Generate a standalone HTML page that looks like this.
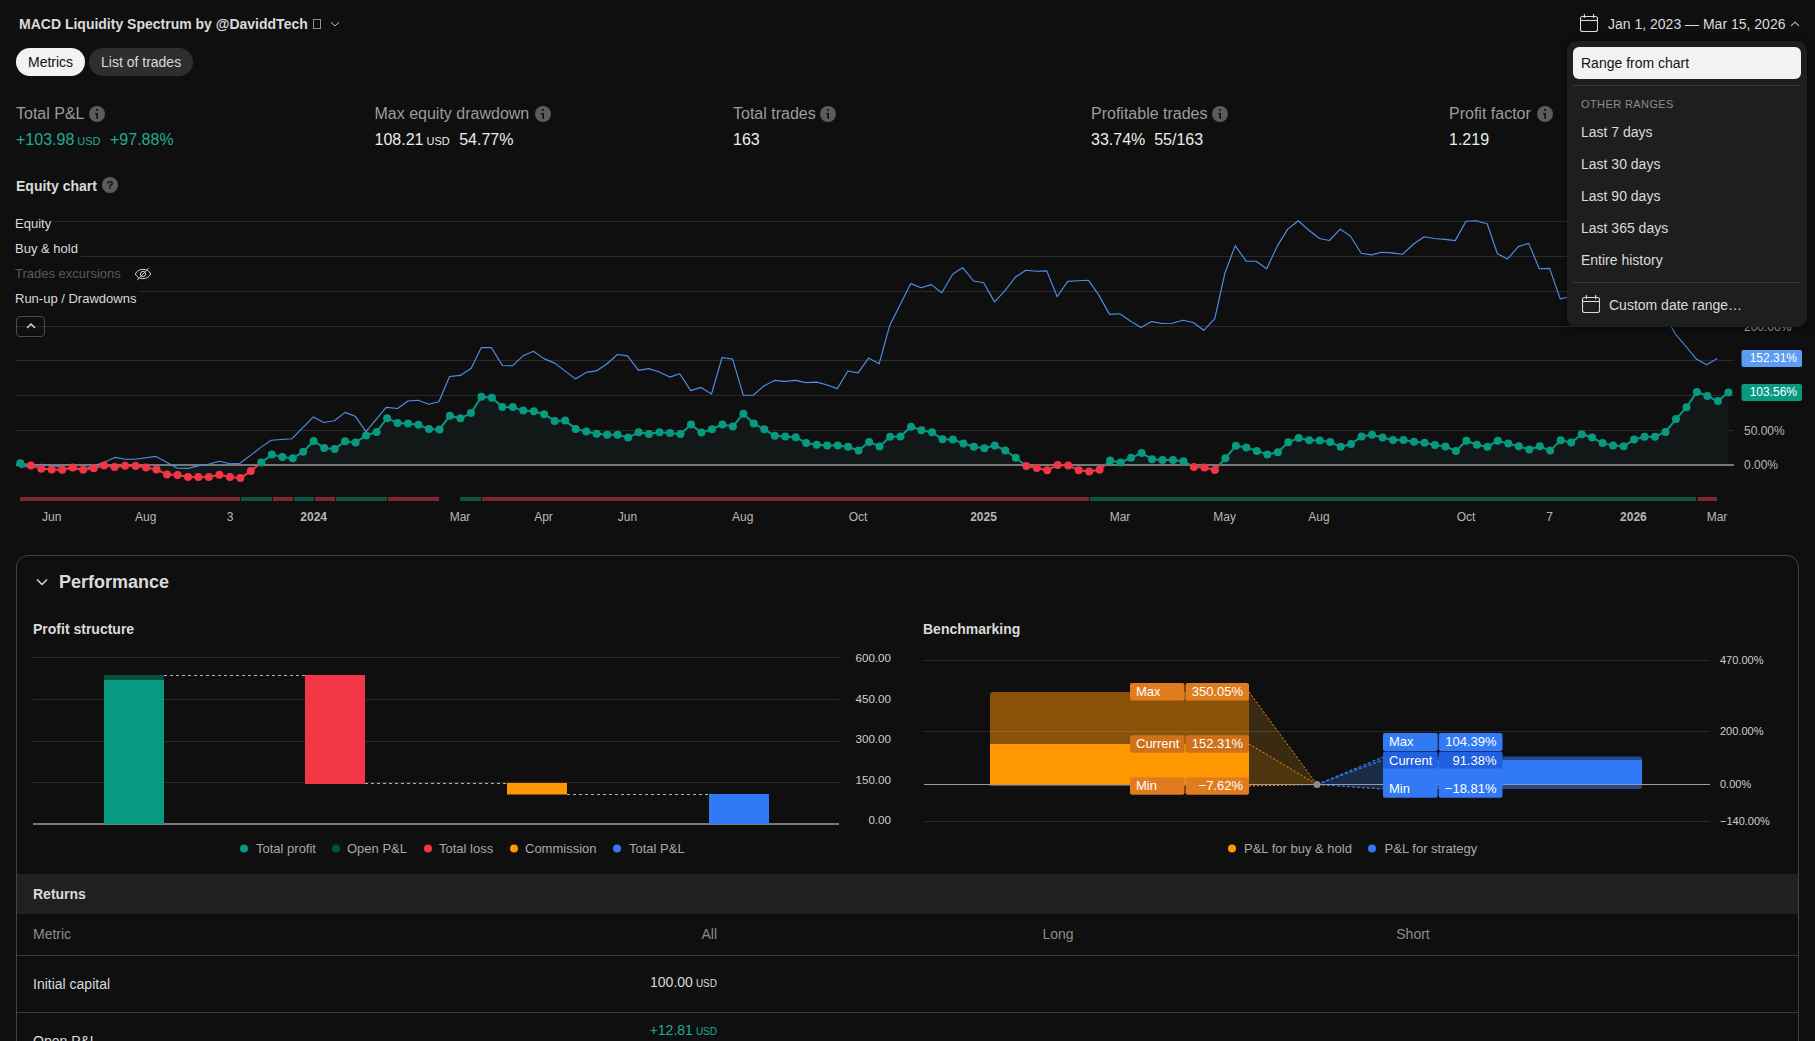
<!DOCTYPE html>
<html><head><meta charset="utf-8">
<style>
*{margin:0;padding:0;box-sizing:border-box}
html,body{width:1815px;height:1041px;overflow:hidden;background:#0f0f0f}
body{position:relative;font-family:"Liberation Sans",sans-serif;color:#dbdbdb}
.a{position:absolute;white-space:nowrap}
.ic{position:absolute;width:16px;height:16px}
svg text{font-family:"Liberation Sans",sans-serif}
.ml{font-size:16px;color:#9c9c9c}
.mv{font-size:16px;color:#ececec}
.usd{font-size:11px}
.dd{font-size:14px;color:#dbdbdb}
</style></head><body>
<svg class="a" style="left:0;top:0" width="1815" height="1041">
<line x1="16" y1="221.5" x2="1734" y2="221.5" stroke="#2a2a2a" stroke-width="1"/>
<line x1="16" y1="256.5" x2="1734" y2="256.5" stroke="#2a2a2a" stroke-width="1"/>
<line x1="16" y1="291.5" x2="1734" y2="291.5" stroke="#2a2a2a" stroke-width="1"/>
<line x1="16" y1="326.5" x2="1734" y2="326.5" stroke="#2a2a2a" stroke-width="1"/>
<line x1="16" y1="360.5" x2="1734" y2="360.5" stroke="#2a2a2a" stroke-width="1"/>
<line x1="16" y1="395.5" x2="1734" y2="395.5" stroke="#2a2a2a" stroke-width="1"/>
<line x1="16" y1="430.5" x2="1734" y2="430.5" stroke="#2a2a2a" stroke-width="1"/>
<path d="M20.3,465 L20.3,463.3 L30.8,465.4 L41.3,468.8 L51.7,469.5 L62.2,469.8 L72.7,467.5 L83.2,469.8 L93.7,468.2 L104.1,465.4 L114.6,467 L125.1,465.7 L135.6,466.1 L146,467.5 L156.5,469.5 L167,474.4 L177.5,475 L188,477.1 L198.4,477.1 L208.9,477.1 L219.4,474.8 L229.9,477.1 L240.4,478.1 L250.8,471.1 L261.3,462.6 L271.8,454.6 L282.3,457.1 L292.8,458.2 L303.2,451.8 L313.7,441 L324.2,447.9 L334.7,448.9 L345.1,441.2 L355.6,442.4 L366.1,435.5 L376.6,432 L387.1,418.2 L397.5,422.9 L408,423.4 L418.5,424.8 L429,429.1 L439.5,429.4 L449.9,415.7 L460.4,418.3 L470.9,413.1 L481.4,396.7 L491.9,397.8 L502.3,407.1 L512.8,407.1 L523.3,410.6 L533.8,411.3 L544.2,414.2 L554.7,420.9 L565.2,420.6 L575.7,428.9 L586.2,431.4 L596.6,433.7 L607.1,434.7 L617.6,434.7 L628.1,437.6 L638.6,432.3 L649,434 L659.5,432.3 L670,433 L680.5,434.1 L691,424.5 L701.4,432.6 L711.9,429.2 L722.4,424.5 L732.9,426.4 L743.4,413.7 L753.8,423.4 L764.3,429.3 L774.8,435.8 L785.3,436.5 L795.7,437.2 L806.2,443.1 L816.7,444.7 L827.2,445.4 L837.7,445.4 L848.1,446.8 L858.6,450.5 L869.1,442 L879.6,446.4 L890.1,436.7 L900.5,436.5 L911,426.8 L921.5,430.3 L932,432.3 L942.5,439.2 L952.9,439.5 L963.4,443.4 L973.9,446.8 L984.4,448.2 L994.8,445.4 L1005.3,450.5 L1015.8,457.8 L1026.3,466.1 L1036.8,467.9 L1047.2,470.2 L1057.7,465.1 L1068.2,465.4 L1078.7,470.2 L1089.2,471.6 L1099.6,469.8 L1110.1,460.6 L1120.6,462.4 L1131.1,457.8 L1141.6,453 L1152,459.2 L1162.5,459.9 L1173,459.9 L1183.5,461.3 L1193.9,467 L1204.4,467.5 L1214.9,470 L1225.4,458.2 L1235.9,445.8 L1246.3,447.5 L1256.8,450.9 L1267.3,454.4 L1277.8,452.3 L1288.3,442.3 L1298.7,438.1 L1309.2,440.3 L1319.7,440.6 L1330.2,442 L1340.7,446.8 L1351.1,444 L1361.6,436.5 L1372.1,434.7 L1382.6,437.6 L1393,439.9 L1403.5,439.9 L1414,441.7 L1424.5,442.7 L1435,445 L1445.4,446.4 L1455.9,451 L1466.4,440.7 L1476.9,444.7 L1487.4,446.8 L1497.8,440.7 L1508.3,443.6 L1518.8,446.3 L1529.3,449.5 L1539.8,446.3 L1550.2,450.6 L1560.7,440.2 L1571.2,442.6 L1581.7,434.3 L1592.1,437.5 L1602.6,443.1 L1613.1,445.5 L1623.6,446.3 L1634.1,439.6 L1644.5,436.7 L1655,436.7 L1665.5,431.9 L1676,419.1 L1686.5,407.2 L1696.9,392 L1707.4,396 L1717.9,401.1 L1728.4,392.5 L1728.4,465 Z" fill="#121717"/>
<line x1="16" y1="465" x2="1734" y2="465" stroke="#9b9b9b" stroke-width="1.5"/>
<polyline fill="none" stroke="#4f8fe6" stroke-width="1.15" stroke-linejoin="round" points="20.3,467.5 31,466 41.7,464.3 56.8,466.1 67.9,468.8 83,469.5 92.6,466.1 103.7,462.6 114.7,457.4 125.7,459.2 135.3,459.2 156,456.4 167,462.6 177.4,468.2 188.4,468.4 200,465.4 208.3,464.3 219.4,461.3 230,463.7 240,463.3 250.5,455.4 260.8,447.4 271.3,440.2 291.8,438.8 313.4,416.9 323.8,422.5 334.3,420.8 345.1,412.4 355.2,416.2 366,431.6 386.2,407.4 397.7,408.5 407.8,401 417.9,400.3 428.7,404.2 438.8,401.8 449.6,376.5 460.4,375.4 471.2,368.2 481.3,347.6 491.4,347.6 502.4,365.5 512.3,365.8 523.1,355.8 533.4,351.3 544.4,358.9 554.7,363.1 575.4,378.9 586.1,372.4 596.3,370.9 607.1,363.7 617.4,354.5 627.5,355.9 638.5,370.4 648.7,368.6 658.7,371.7 669.8,377.1 679.8,373.8 690.7,390.6 701,387.4 711.5,394 722.1,357.5 732.6,359.1 743.3,395.2 753.3,395.2 763.9,385.9 774.4,380.4 784.8,381.4 795.6,380.4 805.9,382.6 816.5,382.1 826.5,384.7 837.3,388.6 847.9,371 858,372.9 868.6,358.1 879.1,363.8 889.7,325.6 910.8,283.6 920.9,287.8 931.3,284.6 941.8,292.8 952.6,274.2 962.7,267.6 973.6,281 983.7,282.7 994.5,301.9 1004.6,291.1 1015.4,277.1 1025.9,270.2 1036.3,271.2 1046.8,270.9 1057.2,296.8 1067.7,281.4 1078.1,280.7 1088.6,280.3 1099,295.4 1109.5,314.4 1119.9,313.8 1130.7,321.3 1141,327.4 1151.6,321.6 1162.1,323.5 1172.4,323.2 1183,320.2 1193.3,322.5 1203.7,330.3 1214.8,318.6 1224.9,273.2 1235.2,245.6 1246.1,261.2 1256.1,261.2 1266.7,268.8 1277.5,245.6 1287.8,229.1 1298.2,220.8 1309.2,230.5 1319.5,238.5 1329.4,240.5 1340.2,229.1 1350.5,236.3 1361.2,253.2 1371.4,254.9 1381.5,252.2 1391.8,252.9 1402.4,254.3 1413.6,244 1424.2,236.7 1434.2,238.5 1444.8,239.4 1455.2,240.6 1466,221.3 1476.1,220.8 1487.2,223.8 1497.4,253.7 1507.5,258.9 1518.3,246.6 1528.7,243.4 1539.3,268.7 1549.6,268.4 1560.2,298.9 1570.5,296.5 1581,290 1592,295 1602,300 1613,298 1623,305 1634,300 1644,310 1654,305 1665,318 1671.3,326.7 1675.3,334 1686,346.5 1696.6,359.3 1706.7,364.7 1717.3,358.5"/>
<line x1="20.3" y1="463.3" x2="28.8" y2="465" stroke="#089981" stroke-width="2"/>
<line x1="28.8" y1="465" x2="30.8" y2="465.4" stroke="#f23645" stroke-width="2"/>
<line x1="30.8" y1="465.4" x2="41.3" y2="468.8" stroke="#f23645" stroke-width="2"/>
<line x1="41.3" y1="468.8" x2="51.7" y2="469.5" stroke="#f23645" stroke-width="2"/>
<line x1="51.7" y1="469.5" x2="62.2" y2="469.8" stroke="#f23645" stroke-width="2"/>
<line x1="62.2" y1="469.8" x2="72.7" y2="467.5" stroke="#f23645" stroke-width="2"/>
<line x1="72.7" y1="467.5" x2="83.2" y2="469.8" stroke="#f23645" stroke-width="2"/>
<line x1="83.2" y1="469.8" x2="93.7" y2="468.2" stroke="#f23645" stroke-width="2"/>
<line x1="93.7" y1="468.2" x2="104.1" y2="465.4" stroke="#f23645" stroke-width="2"/>
<line x1="104.1" y1="465.4" x2="114.6" y2="467" stroke="#f23645" stroke-width="2"/>
<line x1="114.6" y1="467" x2="125.1" y2="465.7" stroke="#f23645" stroke-width="2"/>
<line x1="125.1" y1="465.7" x2="135.6" y2="466.1" stroke="#f23645" stroke-width="2"/>
<line x1="135.6" y1="466.1" x2="146" y2="467.5" stroke="#f23645" stroke-width="2"/>
<line x1="146" y1="467.5" x2="156.5" y2="469.5" stroke="#f23645" stroke-width="2"/>
<line x1="156.5" y1="469.5" x2="167" y2="474.4" stroke="#f23645" stroke-width="2"/>
<line x1="167" y1="474.4" x2="177.5" y2="475" stroke="#f23645" stroke-width="2"/>
<line x1="177.5" y1="475" x2="188" y2="477.1" stroke="#f23645" stroke-width="2"/>
<line x1="188" y1="477.1" x2="198.4" y2="477.1" stroke="#f23645" stroke-width="2"/>
<line x1="198.4" y1="477.1" x2="208.9" y2="477.1" stroke="#f23645" stroke-width="2"/>
<line x1="208.9" y1="477.1" x2="219.4" y2="474.8" stroke="#f23645" stroke-width="2"/>
<line x1="219.4" y1="474.8" x2="229.9" y2="477.1" stroke="#f23645" stroke-width="2"/>
<line x1="229.9" y1="477.1" x2="240.4" y2="478.1" stroke="#f23645" stroke-width="2"/>
<line x1="240.4" y1="478.1" x2="250.8" y2="471.1" stroke="#f23645" stroke-width="2"/>
<line x1="250.8" y1="471.1" x2="258.4" y2="465" stroke="#f23645" stroke-width="2"/>
<line x1="258.4" y1="465" x2="261.3" y2="462.6" stroke="#089981" stroke-width="2"/>
<line x1="261.3" y1="462.6" x2="271.8" y2="454.6" stroke="#089981" stroke-width="2"/>
<line x1="271.8" y1="454.6" x2="282.3" y2="457.1" stroke="#089981" stroke-width="2"/>
<line x1="282.3" y1="457.1" x2="292.8" y2="458.2" stroke="#089981" stroke-width="2"/>
<line x1="292.8" y1="458.2" x2="303.2" y2="451.8" stroke="#089981" stroke-width="2"/>
<line x1="303.2" y1="451.8" x2="313.7" y2="441" stroke="#089981" stroke-width="2"/>
<line x1="313.7" y1="441" x2="324.2" y2="447.9" stroke="#089981" stroke-width="2"/>
<line x1="324.2" y1="447.9" x2="334.7" y2="448.9" stroke="#089981" stroke-width="2"/>
<line x1="334.7" y1="448.9" x2="345.1" y2="441.2" stroke="#089981" stroke-width="2"/>
<line x1="345.1" y1="441.2" x2="355.6" y2="442.4" stroke="#089981" stroke-width="2"/>
<line x1="355.6" y1="442.4" x2="366.1" y2="435.5" stroke="#089981" stroke-width="2"/>
<line x1="366.1" y1="435.5" x2="376.6" y2="432" stroke="#089981" stroke-width="2"/>
<line x1="376.6" y1="432" x2="387.1" y2="418.2" stroke="#089981" stroke-width="2"/>
<line x1="387.1" y1="418.2" x2="397.5" y2="422.9" stroke="#089981" stroke-width="2"/>
<line x1="397.5" y1="422.9" x2="408" y2="423.4" stroke="#089981" stroke-width="2"/>
<line x1="408" y1="423.4" x2="418.5" y2="424.8" stroke="#089981" stroke-width="2"/>
<line x1="418.5" y1="424.8" x2="429" y2="429.1" stroke="#089981" stroke-width="2"/>
<line x1="429" y1="429.1" x2="439.5" y2="429.4" stroke="#089981" stroke-width="2"/>
<line x1="439.5" y1="429.4" x2="449.9" y2="415.7" stroke="#089981" stroke-width="2"/>
<line x1="449.9" y1="415.7" x2="460.4" y2="418.3" stroke="#089981" stroke-width="2"/>
<line x1="460.4" y1="418.3" x2="470.9" y2="413.1" stroke="#089981" stroke-width="2"/>
<line x1="470.9" y1="413.1" x2="481.4" y2="396.7" stroke="#089981" stroke-width="2"/>
<line x1="481.4" y1="396.7" x2="491.9" y2="397.8" stroke="#089981" stroke-width="2"/>
<line x1="491.9" y1="397.8" x2="502.3" y2="407.1" stroke="#089981" stroke-width="2"/>
<line x1="502.3" y1="407.1" x2="512.8" y2="407.1" stroke="#089981" stroke-width="2"/>
<line x1="512.8" y1="407.1" x2="523.3" y2="410.6" stroke="#089981" stroke-width="2"/>
<line x1="523.3" y1="410.6" x2="533.8" y2="411.3" stroke="#089981" stroke-width="2"/>
<line x1="533.8" y1="411.3" x2="544.2" y2="414.2" stroke="#089981" stroke-width="2"/>
<line x1="544.2" y1="414.2" x2="554.7" y2="420.9" stroke="#089981" stroke-width="2"/>
<line x1="554.7" y1="420.9" x2="565.2" y2="420.6" stroke="#089981" stroke-width="2"/>
<line x1="565.2" y1="420.6" x2="575.7" y2="428.9" stroke="#089981" stroke-width="2"/>
<line x1="575.7" y1="428.9" x2="586.2" y2="431.4" stroke="#089981" stroke-width="2"/>
<line x1="586.2" y1="431.4" x2="596.6" y2="433.7" stroke="#089981" stroke-width="2"/>
<line x1="596.6" y1="433.7" x2="607.1" y2="434.7" stroke="#089981" stroke-width="2"/>
<line x1="607.1" y1="434.7" x2="617.6" y2="434.7" stroke="#089981" stroke-width="2"/>
<line x1="617.6" y1="434.7" x2="628.1" y2="437.6" stroke="#089981" stroke-width="2"/>
<line x1="628.1" y1="437.6" x2="638.6" y2="432.3" stroke="#089981" stroke-width="2"/>
<line x1="638.6" y1="432.3" x2="649" y2="434" stroke="#089981" stroke-width="2"/>
<line x1="649" y1="434" x2="659.5" y2="432.3" stroke="#089981" stroke-width="2"/>
<line x1="659.5" y1="432.3" x2="670" y2="433" stroke="#089981" stroke-width="2"/>
<line x1="670" y1="433" x2="680.5" y2="434.1" stroke="#089981" stroke-width="2"/>
<line x1="680.5" y1="434.1" x2="691" y2="424.5" stroke="#089981" stroke-width="2"/>
<line x1="691" y1="424.5" x2="701.4" y2="432.6" stroke="#089981" stroke-width="2"/>
<line x1="701.4" y1="432.6" x2="711.9" y2="429.2" stroke="#089981" stroke-width="2"/>
<line x1="711.9" y1="429.2" x2="722.4" y2="424.5" stroke="#089981" stroke-width="2"/>
<line x1="722.4" y1="424.5" x2="732.9" y2="426.4" stroke="#089981" stroke-width="2"/>
<line x1="732.9" y1="426.4" x2="743.4" y2="413.7" stroke="#089981" stroke-width="2"/>
<line x1="743.4" y1="413.7" x2="753.8" y2="423.4" stroke="#089981" stroke-width="2"/>
<line x1="753.8" y1="423.4" x2="764.3" y2="429.3" stroke="#089981" stroke-width="2"/>
<line x1="764.3" y1="429.3" x2="774.8" y2="435.8" stroke="#089981" stroke-width="2"/>
<line x1="774.8" y1="435.8" x2="785.3" y2="436.5" stroke="#089981" stroke-width="2"/>
<line x1="785.3" y1="436.5" x2="795.7" y2="437.2" stroke="#089981" stroke-width="2"/>
<line x1="795.7" y1="437.2" x2="806.2" y2="443.1" stroke="#089981" stroke-width="2"/>
<line x1="806.2" y1="443.1" x2="816.7" y2="444.7" stroke="#089981" stroke-width="2"/>
<line x1="816.7" y1="444.7" x2="827.2" y2="445.4" stroke="#089981" stroke-width="2"/>
<line x1="827.2" y1="445.4" x2="837.7" y2="445.4" stroke="#089981" stroke-width="2"/>
<line x1="837.7" y1="445.4" x2="848.1" y2="446.8" stroke="#089981" stroke-width="2"/>
<line x1="848.1" y1="446.8" x2="858.6" y2="450.5" stroke="#089981" stroke-width="2"/>
<line x1="858.6" y1="450.5" x2="869.1" y2="442" stroke="#089981" stroke-width="2"/>
<line x1="869.1" y1="442" x2="879.6" y2="446.4" stroke="#089981" stroke-width="2"/>
<line x1="879.6" y1="446.4" x2="890.1" y2="436.7" stroke="#089981" stroke-width="2"/>
<line x1="890.1" y1="436.7" x2="900.5" y2="436.5" stroke="#089981" stroke-width="2"/>
<line x1="900.5" y1="436.5" x2="911" y2="426.8" stroke="#089981" stroke-width="2"/>
<line x1="911" y1="426.8" x2="921.5" y2="430.3" stroke="#089981" stroke-width="2"/>
<line x1="921.5" y1="430.3" x2="932" y2="432.3" stroke="#089981" stroke-width="2"/>
<line x1="932" y1="432.3" x2="942.5" y2="439.2" stroke="#089981" stroke-width="2"/>
<line x1="942.5" y1="439.2" x2="952.9" y2="439.5" stroke="#089981" stroke-width="2"/>
<line x1="952.9" y1="439.5" x2="963.4" y2="443.4" stroke="#089981" stroke-width="2"/>
<line x1="963.4" y1="443.4" x2="973.9" y2="446.8" stroke="#089981" stroke-width="2"/>
<line x1="973.9" y1="446.8" x2="984.4" y2="448.2" stroke="#089981" stroke-width="2"/>
<line x1="984.4" y1="448.2" x2="994.8" y2="445.4" stroke="#089981" stroke-width="2"/>
<line x1="994.8" y1="445.4" x2="1005.3" y2="450.5" stroke="#089981" stroke-width="2"/>
<line x1="1005.3" y1="450.5" x2="1015.8" y2="457.8" stroke="#089981" stroke-width="2"/>
<line x1="1015.8" y1="457.8" x2="1024.9" y2="465" stroke="#089981" stroke-width="2"/>
<line x1="1024.9" y1="465" x2="1026.3" y2="466.1" stroke="#f23645" stroke-width="2"/>
<line x1="1026.3" y1="466.1" x2="1036.8" y2="467.9" stroke="#f23645" stroke-width="2"/>
<line x1="1036.8" y1="467.9" x2="1047.2" y2="470.2" stroke="#f23645" stroke-width="2"/>
<line x1="1047.2" y1="470.2" x2="1057.7" y2="465.1" stroke="#f23645" stroke-width="2"/>
<line x1="1057.7" y1="465.1" x2="1068.2" y2="465.4" stroke="#f23645" stroke-width="2"/>
<line x1="1068.2" y1="465.4" x2="1078.7" y2="470.2" stroke="#f23645" stroke-width="2"/>
<line x1="1078.7" y1="470.2" x2="1089.2" y2="471.6" stroke="#f23645" stroke-width="2"/>
<line x1="1089.2" y1="471.6" x2="1099.6" y2="469.8" stroke="#f23645" stroke-width="2"/>
<line x1="1099.6" y1="469.8" x2="1105.1" y2="465" stroke="#f23645" stroke-width="2"/>
<line x1="1105.1" y1="465" x2="1110.1" y2="460.6" stroke="#089981" stroke-width="2"/>
<line x1="1110.1" y1="460.6" x2="1120.6" y2="462.4" stroke="#089981" stroke-width="2"/>
<line x1="1120.6" y1="462.4" x2="1131.1" y2="457.8" stroke="#089981" stroke-width="2"/>
<line x1="1131.1" y1="457.8" x2="1141.6" y2="453" stroke="#089981" stroke-width="2"/>
<line x1="1141.6" y1="453" x2="1152" y2="459.2" stroke="#089981" stroke-width="2"/>
<line x1="1152" y1="459.2" x2="1162.5" y2="459.9" stroke="#089981" stroke-width="2"/>
<line x1="1162.5" y1="459.9" x2="1173" y2="459.9" stroke="#089981" stroke-width="2"/>
<line x1="1173" y1="459.9" x2="1183.5" y2="461.3" stroke="#089981" stroke-width="2"/>
<line x1="1183.5" y1="461.3" x2="1190.3" y2="465" stroke="#089981" stroke-width="2"/>
<line x1="1190.3" y1="465" x2="1193.9" y2="467" stroke="#f23645" stroke-width="2"/>
<line x1="1193.9" y1="467" x2="1204.4" y2="467.5" stroke="#f23645" stroke-width="2"/>
<line x1="1204.4" y1="467.5" x2="1214.9" y2="470" stroke="#f23645" stroke-width="2"/>
<line x1="1214.9" y1="470" x2="1219.3" y2="465" stroke="#f23645" stroke-width="2"/>
<line x1="1219.3" y1="465" x2="1225.4" y2="458.2" stroke="#089981" stroke-width="2"/>
<line x1="1225.4" y1="458.2" x2="1235.9" y2="445.8" stroke="#089981" stroke-width="2"/>
<line x1="1235.9" y1="445.8" x2="1246.3" y2="447.5" stroke="#089981" stroke-width="2"/>
<line x1="1246.3" y1="447.5" x2="1256.8" y2="450.9" stroke="#089981" stroke-width="2"/>
<line x1="1256.8" y1="450.9" x2="1267.3" y2="454.4" stroke="#089981" stroke-width="2"/>
<line x1="1267.3" y1="454.4" x2="1277.8" y2="452.3" stroke="#089981" stroke-width="2"/>
<line x1="1277.8" y1="452.3" x2="1288.3" y2="442.3" stroke="#089981" stroke-width="2"/>
<line x1="1288.3" y1="442.3" x2="1298.7" y2="438.1" stroke="#089981" stroke-width="2"/>
<line x1="1298.7" y1="438.1" x2="1309.2" y2="440.3" stroke="#089981" stroke-width="2"/>
<line x1="1309.2" y1="440.3" x2="1319.7" y2="440.6" stroke="#089981" stroke-width="2"/>
<line x1="1319.7" y1="440.6" x2="1330.2" y2="442" stroke="#089981" stroke-width="2"/>
<line x1="1330.2" y1="442" x2="1340.7" y2="446.8" stroke="#089981" stroke-width="2"/>
<line x1="1340.7" y1="446.8" x2="1351.1" y2="444" stroke="#089981" stroke-width="2"/>
<line x1="1351.1" y1="444" x2="1361.6" y2="436.5" stroke="#089981" stroke-width="2"/>
<line x1="1361.6" y1="436.5" x2="1372.1" y2="434.7" stroke="#089981" stroke-width="2"/>
<line x1="1372.1" y1="434.7" x2="1382.6" y2="437.6" stroke="#089981" stroke-width="2"/>
<line x1="1382.6" y1="437.6" x2="1393" y2="439.9" stroke="#089981" stroke-width="2"/>
<line x1="1393" y1="439.9" x2="1403.5" y2="439.9" stroke="#089981" stroke-width="2"/>
<line x1="1403.5" y1="439.9" x2="1414" y2="441.7" stroke="#089981" stroke-width="2"/>
<line x1="1414" y1="441.7" x2="1424.5" y2="442.7" stroke="#089981" stroke-width="2"/>
<line x1="1424.5" y1="442.7" x2="1435" y2="445" stroke="#089981" stroke-width="2"/>
<line x1="1435" y1="445" x2="1445.4" y2="446.4" stroke="#089981" stroke-width="2"/>
<line x1="1445.4" y1="446.4" x2="1455.9" y2="451" stroke="#089981" stroke-width="2"/>
<line x1="1455.9" y1="451" x2="1466.4" y2="440.7" stroke="#089981" stroke-width="2"/>
<line x1="1466.4" y1="440.7" x2="1476.9" y2="444.7" stroke="#089981" stroke-width="2"/>
<line x1="1476.9" y1="444.7" x2="1487.4" y2="446.8" stroke="#089981" stroke-width="2"/>
<line x1="1487.4" y1="446.8" x2="1497.8" y2="440.7" stroke="#089981" stroke-width="2"/>
<line x1="1497.8" y1="440.7" x2="1508.3" y2="443.6" stroke="#089981" stroke-width="2"/>
<line x1="1508.3" y1="443.6" x2="1518.8" y2="446.3" stroke="#089981" stroke-width="2"/>
<line x1="1518.8" y1="446.3" x2="1529.3" y2="449.5" stroke="#089981" stroke-width="2"/>
<line x1="1529.3" y1="449.5" x2="1539.8" y2="446.3" stroke="#089981" stroke-width="2"/>
<line x1="1539.8" y1="446.3" x2="1550.2" y2="450.6" stroke="#089981" stroke-width="2"/>
<line x1="1550.2" y1="450.6" x2="1560.7" y2="440.2" stroke="#089981" stroke-width="2"/>
<line x1="1560.7" y1="440.2" x2="1571.2" y2="442.6" stroke="#089981" stroke-width="2"/>
<line x1="1571.2" y1="442.6" x2="1581.7" y2="434.3" stroke="#089981" stroke-width="2"/>
<line x1="1581.7" y1="434.3" x2="1592.1" y2="437.5" stroke="#089981" stroke-width="2"/>
<line x1="1592.1" y1="437.5" x2="1602.6" y2="443.1" stroke="#089981" stroke-width="2"/>
<line x1="1602.6" y1="443.1" x2="1613.1" y2="445.5" stroke="#089981" stroke-width="2"/>
<line x1="1613.1" y1="445.5" x2="1623.6" y2="446.3" stroke="#089981" stroke-width="2"/>
<line x1="1623.6" y1="446.3" x2="1634.1" y2="439.6" stroke="#089981" stroke-width="2"/>
<line x1="1634.1" y1="439.6" x2="1644.5" y2="436.7" stroke="#089981" stroke-width="2"/>
<line x1="1644.5" y1="436.7" x2="1655" y2="436.7" stroke="#089981" stroke-width="2"/>
<line x1="1655" y1="436.7" x2="1665.5" y2="431.9" stroke="#089981" stroke-width="2"/>
<line x1="1665.5" y1="431.9" x2="1676" y2="419.1" stroke="#089981" stroke-width="2"/>
<line x1="1676" y1="419.1" x2="1686.5" y2="407.2" stroke="#089981" stroke-width="2"/>
<line x1="1686.5" y1="407.2" x2="1696.9" y2="392" stroke="#089981" stroke-width="2"/>
<line x1="1696.9" y1="392" x2="1707.4" y2="396" stroke="#089981" stroke-width="2"/>
<line x1="1707.4" y1="396" x2="1717.9" y2="401.1" stroke="#089981" stroke-width="2"/>
<line x1="1717.9" y1="401.1" x2="1728.4" y2="392.5" stroke="#089981" stroke-width="2"/>
<circle cx="20.3" cy="463.3" r="4" fill="#089981"/>
<circle cx="30.8" cy="465.4" r="4" fill="#f23645"/>
<circle cx="41.3" cy="468.8" r="4" fill="#f23645"/>
<circle cx="51.7" cy="469.5" r="4" fill="#f23645"/>
<circle cx="62.2" cy="469.8" r="4" fill="#f23645"/>
<circle cx="72.7" cy="467.5" r="4" fill="#f23645"/>
<circle cx="83.2" cy="469.8" r="4" fill="#f23645"/>
<circle cx="93.7" cy="468.2" r="4" fill="#f23645"/>
<circle cx="104.1" cy="465.4" r="4" fill="#f23645"/>
<circle cx="114.6" cy="467" r="4" fill="#f23645"/>
<circle cx="125.1" cy="465.7" r="4" fill="#f23645"/>
<circle cx="135.6" cy="466.1" r="4" fill="#f23645"/>
<circle cx="146" cy="467.5" r="4" fill="#f23645"/>
<circle cx="156.5" cy="469.5" r="4" fill="#f23645"/>
<circle cx="167" cy="474.4" r="4" fill="#f23645"/>
<circle cx="177.5" cy="475" r="4" fill="#f23645"/>
<circle cx="188" cy="477.1" r="4" fill="#f23645"/>
<circle cx="198.4" cy="477.1" r="4" fill="#f23645"/>
<circle cx="208.9" cy="477.1" r="4" fill="#f23645"/>
<circle cx="219.4" cy="474.8" r="4" fill="#f23645"/>
<circle cx="229.9" cy="477.1" r="4" fill="#f23645"/>
<circle cx="240.4" cy="478.1" r="4" fill="#f23645"/>
<circle cx="250.8" cy="471.1" r="4" fill="#f23645"/>
<circle cx="261.3" cy="462.6" r="4" fill="#089981"/>
<circle cx="271.8" cy="454.6" r="4" fill="#089981"/>
<circle cx="282.3" cy="457.1" r="4" fill="#089981"/>
<circle cx="292.8" cy="458.2" r="4" fill="#089981"/>
<circle cx="303.2" cy="451.8" r="4" fill="#089981"/>
<circle cx="313.7" cy="441" r="4" fill="#089981"/>
<circle cx="324.2" cy="447.9" r="4" fill="#089981"/>
<circle cx="334.7" cy="448.9" r="4" fill="#089981"/>
<circle cx="345.1" cy="441.2" r="4" fill="#089981"/>
<circle cx="355.6" cy="442.4" r="4" fill="#089981"/>
<circle cx="366.1" cy="435.5" r="4" fill="#089981"/>
<circle cx="376.6" cy="432" r="4" fill="#089981"/>
<circle cx="387.1" cy="418.2" r="4" fill="#089981"/>
<circle cx="397.5" cy="422.9" r="4" fill="#089981"/>
<circle cx="408" cy="423.4" r="4" fill="#089981"/>
<circle cx="418.5" cy="424.8" r="4" fill="#089981"/>
<circle cx="429" cy="429.1" r="4" fill="#089981"/>
<circle cx="439.5" cy="429.4" r="4" fill="#089981"/>
<circle cx="449.9" cy="415.7" r="4" fill="#089981"/>
<circle cx="460.4" cy="418.3" r="4" fill="#089981"/>
<circle cx="470.9" cy="413.1" r="4" fill="#089981"/>
<circle cx="481.4" cy="396.7" r="4" fill="#089981"/>
<circle cx="491.9" cy="397.8" r="4" fill="#089981"/>
<circle cx="502.3" cy="407.1" r="4" fill="#089981"/>
<circle cx="512.8" cy="407.1" r="4" fill="#089981"/>
<circle cx="523.3" cy="410.6" r="4" fill="#089981"/>
<circle cx="533.8" cy="411.3" r="4" fill="#089981"/>
<circle cx="544.2" cy="414.2" r="4" fill="#089981"/>
<circle cx="554.7" cy="420.9" r="4" fill="#089981"/>
<circle cx="565.2" cy="420.6" r="4" fill="#089981"/>
<circle cx="575.7" cy="428.9" r="4" fill="#089981"/>
<circle cx="586.2" cy="431.4" r="4" fill="#089981"/>
<circle cx="596.6" cy="433.7" r="4" fill="#089981"/>
<circle cx="607.1" cy="434.7" r="4" fill="#089981"/>
<circle cx="617.6" cy="434.7" r="4" fill="#089981"/>
<circle cx="628.1" cy="437.6" r="4" fill="#089981"/>
<circle cx="638.6" cy="432.3" r="4" fill="#089981"/>
<circle cx="649" cy="434" r="4" fill="#089981"/>
<circle cx="659.5" cy="432.3" r="4" fill="#089981"/>
<circle cx="670" cy="433" r="4" fill="#089981"/>
<circle cx="680.5" cy="434.1" r="4" fill="#089981"/>
<circle cx="691" cy="424.5" r="4" fill="#089981"/>
<circle cx="701.4" cy="432.6" r="4" fill="#089981"/>
<circle cx="711.9" cy="429.2" r="4" fill="#089981"/>
<circle cx="722.4" cy="424.5" r="4" fill="#089981"/>
<circle cx="732.9" cy="426.4" r="4" fill="#089981"/>
<circle cx="743.4" cy="413.7" r="4" fill="#089981"/>
<circle cx="753.8" cy="423.4" r="4" fill="#089981"/>
<circle cx="764.3" cy="429.3" r="4" fill="#089981"/>
<circle cx="774.8" cy="435.8" r="4" fill="#089981"/>
<circle cx="785.3" cy="436.5" r="4" fill="#089981"/>
<circle cx="795.7" cy="437.2" r="4" fill="#089981"/>
<circle cx="806.2" cy="443.1" r="4" fill="#089981"/>
<circle cx="816.7" cy="444.7" r="4" fill="#089981"/>
<circle cx="827.2" cy="445.4" r="4" fill="#089981"/>
<circle cx="837.7" cy="445.4" r="4" fill="#089981"/>
<circle cx="848.1" cy="446.8" r="4" fill="#089981"/>
<circle cx="858.6" cy="450.5" r="4" fill="#089981"/>
<circle cx="869.1" cy="442" r="4" fill="#089981"/>
<circle cx="879.6" cy="446.4" r="4" fill="#089981"/>
<circle cx="890.1" cy="436.7" r="4" fill="#089981"/>
<circle cx="900.5" cy="436.5" r="4" fill="#089981"/>
<circle cx="911" cy="426.8" r="4" fill="#089981"/>
<circle cx="921.5" cy="430.3" r="4" fill="#089981"/>
<circle cx="932" cy="432.3" r="4" fill="#089981"/>
<circle cx="942.5" cy="439.2" r="4" fill="#089981"/>
<circle cx="952.9" cy="439.5" r="4" fill="#089981"/>
<circle cx="963.4" cy="443.4" r="4" fill="#089981"/>
<circle cx="973.9" cy="446.8" r="4" fill="#089981"/>
<circle cx="984.4" cy="448.2" r="4" fill="#089981"/>
<circle cx="994.8" cy="445.4" r="4" fill="#089981"/>
<circle cx="1005.3" cy="450.5" r="4" fill="#089981"/>
<circle cx="1015.8" cy="457.8" r="4" fill="#089981"/>
<circle cx="1026.3" cy="466.1" r="4" fill="#f23645"/>
<circle cx="1036.8" cy="467.9" r="4" fill="#f23645"/>
<circle cx="1047.2" cy="470.2" r="4" fill="#f23645"/>
<circle cx="1057.7" cy="465.1" r="4" fill="#f23645"/>
<circle cx="1068.2" cy="465.4" r="4" fill="#f23645"/>
<circle cx="1078.7" cy="470.2" r="4" fill="#f23645"/>
<circle cx="1089.2" cy="471.6" r="4" fill="#f23645"/>
<circle cx="1099.6" cy="469.8" r="4" fill="#f23645"/>
<circle cx="1110.1" cy="460.6" r="4" fill="#089981"/>
<circle cx="1120.6" cy="462.4" r="4" fill="#089981"/>
<circle cx="1131.1" cy="457.8" r="4" fill="#089981"/>
<circle cx="1141.6" cy="453" r="4" fill="#089981"/>
<circle cx="1152" cy="459.2" r="4" fill="#089981"/>
<circle cx="1162.5" cy="459.9" r="4" fill="#089981"/>
<circle cx="1173" cy="459.9" r="4" fill="#089981"/>
<circle cx="1183.5" cy="461.3" r="4" fill="#089981"/>
<circle cx="1193.9" cy="467" r="4" fill="#f23645"/>
<circle cx="1204.4" cy="467.5" r="4" fill="#f23645"/>
<circle cx="1214.9" cy="470" r="4" fill="#f23645"/>
<circle cx="1225.4" cy="458.2" r="4" fill="#089981"/>
<circle cx="1235.9" cy="445.8" r="4" fill="#089981"/>
<circle cx="1246.3" cy="447.5" r="4" fill="#089981"/>
<circle cx="1256.8" cy="450.9" r="4" fill="#089981"/>
<circle cx="1267.3" cy="454.4" r="4" fill="#089981"/>
<circle cx="1277.8" cy="452.3" r="4" fill="#089981"/>
<circle cx="1288.3" cy="442.3" r="4" fill="#089981"/>
<circle cx="1298.7" cy="438.1" r="4" fill="#089981"/>
<circle cx="1309.2" cy="440.3" r="4" fill="#089981"/>
<circle cx="1319.7" cy="440.6" r="4" fill="#089981"/>
<circle cx="1330.2" cy="442" r="4" fill="#089981"/>
<circle cx="1340.7" cy="446.8" r="4" fill="#089981"/>
<circle cx="1351.1" cy="444" r="4" fill="#089981"/>
<circle cx="1361.6" cy="436.5" r="4" fill="#089981"/>
<circle cx="1372.1" cy="434.7" r="4" fill="#089981"/>
<circle cx="1382.6" cy="437.6" r="4" fill="#089981"/>
<circle cx="1393" cy="439.9" r="4" fill="#089981"/>
<circle cx="1403.5" cy="439.9" r="4" fill="#089981"/>
<circle cx="1414" cy="441.7" r="4" fill="#089981"/>
<circle cx="1424.5" cy="442.7" r="4" fill="#089981"/>
<circle cx="1435" cy="445" r="4" fill="#089981"/>
<circle cx="1445.4" cy="446.4" r="4" fill="#089981"/>
<circle cx="1455.9" cy="451" r="4" fill="#089981"/>
<circle cx="1466.4" cy="440.7" r="4" fill="#089981"/>
<circle cx="1476.9" cy="444.7" r="4" fill="#089981"/>
<circle cx="1487.4" cy="446.8" r="4" fill="#089981"/>
<circle cx="1497.8" cy="440.7" r="4" fill="#089981"/>
<circle cx="1508.3" cy="443.6" r="4" fill="#089981"/>
<circle cx="1518.8" cy="446.3" r="4" fill="#089981"/>
<circle cx="1529.3" cy="449.5" r="4" fill="#089981"/>
<circle cx="1539.8" cy="446.3" r="4" fill="#089981"/>
<circle cx="1550.2" cy="450.6" r="4" fill="#089981"/>
<circle cx="1560.7" cy="440.2" r="4" fill="#089981"/>
<circle cx="1571.2" cy="442.6" r="4" fill="#089981"/>
<circle cx="1581.7" cy="434.3" r="4" fill="#089981"/>
<circle cx="1592.1" cy="437.5" r="4" fill="#089981"/>
<circle cx="1602.6" cy="443.1" r="4" fill="#089981"/>
<circle cx="1613.1" cy="445.5" r="4" fill="#089981"/>
<circle cx="1623.6" cy="446.3" r="4" fill="#089981"/>
<circle cx="1634.1" cy="439.6" r="4" fill="#089981"/>
<circle cx="1644.5" cy="436.7" r="4" fill="#089981"/>
<circle cx="1655" cy="436.7" r="4" fill="#089981"/>
<circle cx="1665.5" cy="431.9" r="4" fill="#089981"/>
<circle cx="1676" cy="419.1" r="4" fill="#089981"/>
<circle cx="1686.5" cy="407.2" r="4" fill="#089981"/>
<circle cx="1696.9" cy="392" r="4" fill="#089981"/>
<circle cx="1707.4" cy="396" r="4" fill="#089981"/>
<circle cx="1717.9" cy="401.1" r="4" fill="#089981"/>
<circle cx="1728.4" cy="392.5" r="4" fill="#089981"/>
<rect x="20" y="497" width="220" height="4" fill="#7f2530"/>
<rect x="241" y="497" width="31" height="4" fill="#0c5546"/>
<rect x="273" y="497" width="20" height="4" fill="#7f2530"/>
<rect x="294" y="497" width="20" height="4" fill="#0c5546"/>
<rect x="315" y="497" width="20" height="4" fill="#7f2530"/>
<rect x="336" y="497" width="51" height="4" fill="#0c5546"/>
<rect x="388" y="497" width="51" height="4" fill="#7f2530"/>
<rect x="460" y="497" width="21" height="4" fill="#0c5546"/>
<rect x="482" y="497" width="607" height="4" fill="#7f2530"/>
<rect x="1090" y="497" width="606" height="4" fill="#0c5546"/>
<rect x="1697.5" y="497" width="19.5" height="4" fill="#7f2530"/>
<text x="51.8" y="521" text-anchor="middle" fill="#b8b8b8" font-size="12">Jun</text>
<text x="145.8" y="521" text-anchor="middle" fill="#b8b8b8" font-size="12">Aug</text>
<text x="230" y="521" text-anchor="middle" fill="#b8b8b8" font-size="12">3</text>
<text x="313.7" y="521" text-anchor="middle" fill="#b8b8b8" font-size="12" font-weight="bold">2024</text>
<text x="460" y="521" text-anchor="middle" fill="#b8b8b8" font-size="12">Mar</text>
<text x="543.5" y="521" text-anchor="middle" fill="#b8b8b8" font-size="12">Apr</text>
<text x="627.4" y="521" text-anchor="middle" fill="#b8b8b8" font-size="12">Jun</text>
<text x="742.7" y="521" text-anchor="middle" fill="#b8b8b8" font-size="12">Aug</text>
<text x="858" y="521" text-anchor="middle" fill="#b8b8b8" font-size="12">Oct</text>
<text x="983.5" y="521" text-anchor="middle" fill="#b8b8b8" font-size="12" font-weight="bold">2025</text>
<text x="1120" y="521" text-anchor="middle" fill="#b8b8b8" font-size="12">Mar</text>
<text x="1224.6" y="521" text-anchor="middle" fill="#b8b8b8" font-size="12">May</text>
<text x="1319" y="521" text-anchor="middle" fill="#b8b8b8" font-size="12">Aug</text>
<text x="1466" y="521" text-anchor="middle" fill="#b8b8b8" font-size="12">Oct</text>
<text x="1549.5" y="521" text-anchor="middle" fill="#b8b8b8" font-size="12">7</text>
<text x="1633.4" y="521" text-anchor="middle" fill="#b8b8b8" font-size="12" font-weight="bold">2026</text>
<text x="1717" y="521" text-anchor="middle" fill="#b8b8b8" font-size="12">Mar</text>
<text x="1744" y="331" fill="#b8b8b8" font-size="12">200.00%</text>
<text x="1744" y="435" fill="#b8b8b8" font-size="12">50.00%</text>
<text x="1744" y="469" fill="#b8b8b8" font-size="12">0.00%</text>
<rect x="1741.5" y="350" width="60.5" height="17" rx="2" fill="#5b9cf6"/>
<text x="1797" y="362" text-anchor="end" fill="#ffffff" font-size="12">152.31%</text>
<rect x="1741.5" y="384" width="60.5" height="17" rx="2" fill="#089981"/>
<text x="1797" y="396" text-anchor="end" fill="#ffffff" font-size="12">103.56%</text>
<line x1="33" y1="657.5" x2="839" y2="657.5" stroke="#2a2a2a"/>
<line x1="33" y1="699.5" x2="839" y2="699.5" stroke="#2a2a2a"/>
<line x1="33" y1="741.5" x2="839" y2="741.5" stroke="#2a2a2a"/>
<line x1="33" y1="782.5" x2="839" y2="782.5" stroke="#2a2a2a"/>
<line x1="33" y1="824" x2="839" y2="824" stroke="#9b9b9b" stroke-width="1.5"/>
<rect x="104" y="675" width="60" height="149" fill="#089981"/>
<rect x="104" y="675" width="60" height="5" fill="#05513f"/>
<rect x="305" y="675" width="60" height="109" fill="#f23645"/>
<rect x="507" y="783" width="60" height="11.5" fill="#ff9800"/>
<rect x="709" y="794" width="60" height="30" fill="#3179f5"/>
<line x1="164" y1="675.5" x2="305" y2="675.5" stroke="#b2b2b2" stroke-dasharray="3 3"/>
<line x1="365" y1="783.5" x2="507" y2="783.5" stroke="#b2b2b2" stroke-dasharray="3 3"/>
<line x1="567" y1="794.5" x2="709" y2="794.5" stroke="#b2b2b2" stroke-dasharray="3 3"/>
<text x="891" y="662" text-anchor="end" fill="#d0d0d0" font-size="11.6">600.00</text>
<text x="891" y="703" text-anchor="end" fill="#d0d0d0" font-size="11.6">450.00</text>
<text x="891" y="743" text-anchor="end" fill="#d0d0d0" font-size="11.6">300.00</text>
<text x="891" y="784" text-anchor="end" fill="#d0d0d0" font-size="11.6">150.00</text>
<text x="891" y="824" text-anchor="end" fill="#d0d0d0" font-size="11.6">0.00</text>
<circle cx="244" cy="848.5" r="4" fill="#089981"/>
<text x="256" y="853" fill="#a8a8a8" font-size="13">Total profit</text>
<circle cx="336" cy="848.5" r="4" fill="#05513f"/>
<text x="347" y="853" fill="#a8a8a8" font-size="13">Open P&amp;L</text>
<circle cx="428" cy="848.5" r="4" fill="#f23645"/>
<text x="439" y="853" fill="#a8a8a8" font-size="13">Total loss</text>
<circle cx="514" cy="848.5" r="4" fill="#ff9800"/>
<text x="525" y="853" fill="#a8a8a8" font-size="13">Commission</text>
<circle cx="617" cy="848.5" r="4" fill="#3179f5"/>
<text x="629" y="853" fill="#a8a8a8" font-size="13">Total P&amp;L</text>
<line x1="924" y1="784.5" x2="1710" y2="784.5" stroke="#9b9b9b" stroke-width="1.2"/>
<path d="M990,695 Q990,692 993,692 L1249,692 L1249,786 L990,786 Z" fill="#8a5208"/>
<rect x="990" y="744" width="259" height="40.5" fill="#ff9800"/>
<path d="M1249,692 L1317,784.5 L1249,786 Z" fill="#3a2a12"/>
<path d="M1249,744 L1317,784.5 L1249,784.5 Z" fill="#4d3510"/>
<line x1="1249" y1="692" x2="1317" y2="784.5" stroke="#ff9800" stroke-width="1" stroke-dasharray="2 2"/>
<line x1="1249" y1="744" x2="1317" y2="784.5" stroke="#ff9800" stroke-width="1" stroke-dasharray="2 2"/>
<line x1="1249" y1="786" x2="1317" y2="784.5" stroke="#ff9800" stroke-width="1" stroke-dasharray="2 2"/>
<path d="M1317,784.5 L1383,757 L1383,789 Z" fill="#1b2a45"/>
<rect x="1383" y="756.5" width="259" height="32.5" rx="3" fill="#23488f"/>
<rect x="1383" y="760" width="259" height="24.5" fill="#3179f5"/>
<line x1="1317" y1="784.5" x2="1383" y2="757" stroke="#3179f5" stroke-width="1.2" stroke-dasharray="3 2"/>
<line x1="1317" y1="784.5" x2="1383" y2="760" stroke="#3179f5" stroke-width="1.2" stroke-dasharray="3 2"/>
<line x1="1317" y1="784.5" x2="1383" y2="789" stroke="#3179f5" stroke-width="1.2" stroke-dasharray="3 2"/>
<line x1="924" y1="660.5" x2="1710" y2="660.5" stroke="rgba(255,255,255,0.11)"/>
<line x1="924" y1="731.5" x2="1710" y2="731.5" stroke="rgba(255,255,255,0.11)"/>
<line x1="924" y1="821.5" x2="1710" y2="821.5" stroke="rgba(255,255,255,0.11)"/>
<line x1="924" y1="784.5" x2="1710" y2="784.5" stroke="#9b9b9b" stroke-width="1.2"/>
<circle cx="1317" cy="784.5" r="3.5" fill="#8c8c8c"/>
<rect x="1130" y="683" width="54.5" height="17.5" rx="2" fill="#e07c1f"/><rect x="1185.5" y="683" width="63.5" height="17.5" rx="2" fill="#e07c1f"/><text x="1136" y="696" fill="#ffffff" font-size="13">Max</text><text x="1243" y="696" text-anchor="end" fill="#ffffff" font-size="13">350.05%</text>
<rect x="1130" y="735.3" width="54.5" height="17.5" rx="2" fill="#cf7119"/><rect x="1185.5" y="735.3" width="63.5" height="17.5" rx="2" fill="#cf7119"/><text x="1136" y="748.3" fill="#ffffff" font-size="13">Current</text><text x="1243" y="748.3" text-anchor="end" fill="#ffffff" font-size="13">152.31%</text>
<rect x="1130" y="777.3" width="54.5" height="17.5" rx="2" fill="#e07c1f"/><rect x="1185.5" y="777.3" width="63.5" height="17.5" rx="2" fill="#e07c1f"/><text x="1136" y="790.3" fill="#ffffff" font-size="13">Min</text><text x="1243" y="790.3" text-anchor="end" fill="#ffffff" font-size="13">−7.62%</text>
<rect x="1383" y="733" width="54.700000000000045" height="18" rx="2" fill="#3179f5"/><rect x="1438.7" y="733" width="63.799999999999955" height="18" rx="2" fill="#3179f5"/><text x="1389" y="746" fill="#ffffff" font-size="13">Max</text><text x="1496.5" y="746" text-anchor="end" fill="#ffffff" font-size="13">104.39%</text>
<rect x="1383" y="751.6" width="54.700000000000045" height="17" rx="2" fill="#1f5fe0"/><rect x="1438.7" y="751.6" width="63.799999999999955" height="17" rx="2" fill="#1f5fe0"/><text x="1389" y="764.6" fill="#ffffff" font-size="13">Current</text><text x="1496.5" y="764.6" text-anchor="end" fill="#ffffff" font-size="13">91.38%</text>
<rect x="1383" y="779.7" width="54.700000000000045" height="18" rx="2" fill="#3179f5"/><rect x="1438.7" y="779.7" width="63.799999999999955" height="18" rx="2" fill="#3179f5"/><text x="1389" y="792.7" fill="#ffffff" font-size="13">Min</text><text x="1496.5" y="792.7" text-anchor="end" fill="#ffffff" font-size="13">−18.81%</text>
<text x="1720" y="664" fill="#d0d0d0" font-size="11">470.00%</text>
<text x="1720" y="735" fill="#d0d0d0" font-size="11">200.00%</text>
<text x="1720" y="788" fill="#d0d0d0" font-size="11">0.00%</text>
<text x="1720" y="825" fill="#d0d0d0" font-size="11">−140.00%</text>
<circle cx="1232" cy="848.5" r="4" fill="#ff9800"/>
<text x="1244" y="853" fill="#a8a8a8" font-size="13">P&amp;L for buy &amp; hold</text>
<circle cx="1372" cy="848.5" r="4" fill="#3179f5"/>
<text x="1384.6" y="853" fill="#a8a8a8" font-size="13">P&amp;L for strategy</text>
</svg>
<!-- header -->
<div class="a" style="left:19px;top:16px;font-size:14px;font-weight:bold;color:#dbdbdb;line-height:17px">MACD Liquidity Spectrum by @DaviddTech</div>
<div class="a" style="left:313px;top:19px;width:8px;height:10px;border:1px solid #8c8c8c"></div>
<svg class="a" style="left:330px;top:20px" width="10" height="8" viewBox="0 0 10 8"><path d="M1,2.4 L5,5.9 L9,2.4" fill="none" stroke="#c4c4c4" stroke-width="1"/></svg>
<div class="a" style="left:16px;top:48px;width:69px;height:28px;border-radius:14px;background:#f2f2f2;color:#0f0f0f;font-size:14px;line-height:28px;padding-left:12px">Metrics</div>
<div class="a" style="left:89px;top:48px;width:104px;height:28px;border-radius:14px;background:#2e2e2e;color:#dbdbdb;font-size:14px;line-height:28px;padding-left:12px">List of trades</div>
<!-- metrics -->
<div class="a ml" style="left:16px;top:105px">Total P&amp;L</div><div class="ic" style="left:89px;top:106px"><svg width="16" height="16" viewBox="0 0 16 16"><circle cx="8" cy="8" r="8" fill="#5c5c5c"/><rect x="7" y="3.1" width="1.9" height="1.7" fill="#0f0f0f"/><rect x="7.4" y="7.1" width="1.6" height="5.8" fill="#0f0f0f"/><rect x="6" y="7.1" width="1.8" height="1.2" fill="#0f0f0f"/></svg></div>
<div class="a mv" style="left:16px;top:131px;color:#22ab94">+103.98<span class="usd" style="margin-left:3px">USD</span><span style="margin-left:9.5px"></span>+97.88%</div>
<div class="a ml" style="left:374.5px;top:105px">Max equity drawdown</div><div class="ic" style="left:534.5px;top:106px"><svg width="16" height="16" viewBox="0 0 16 16"><circle cx="8" cy="8" r="8" fill="#5c5c5c"/><rect x="7" y="3.1" width="1.9" height="1.7" fill="#0f0f0f"/><rect x="7.4" y="7.1" width="1.6" height="5.8" fill="#0f0f0f"/><rect x="6" y="7.1" width="1.8" height="1.2" fill="#0f0f0f"/></svg></div>
<div class="a mv" style="left:374.5px;top:131px">108.21<span class="usd" style="margin-left:3px">USD</span><span style="margin-left:9.5px"></span>54.77%</div>
<div class="a ml" style="left:733px;top:105px">Total trades</div><div class="ic" style="left:820px;top:106px"><svg width="16" height="16" viewBox="0 0 16 16"><circle cx="8" cy="8" r="8" fill="#5c5c5c"/><rect x="7" y="3.1" width="1.9" height="1.7" fill="#0f0f0f"/><rect x="7.4" y="7.1" width="1.6" height="5.8" fill="#0f0f0f"/><rect x="6" y="7.1" width="1.8" height="1.2" fill="#0f0f0f"/></svg></div>
<div class="a mv" style="left:733px;top:131px">163</div>
<div class="a ml" style="left:1091px;top:105px">Profitable trades</div><div class="ic" style="left:1212px;top:106px"><svg width="16" height="16" viewBox="0 0 16 16"><circle cx="8" cy="8" r="8" fill="#5c5c5c"/><rect x="7" y="3.1" width="1.9" height="1.7" fill="#0f0f0f"/><rect x="7.4" y="7.1" width="1.6" height="5.8" fill="#0f0f0f"/><rect x="6" y="7.1" width="1.8" height="1.2" fill="#0f0f0f"/></svg></div>
<div class="a mv" style="left:1091px;top:131px">33.74%&nbsp; 55/163</div>
<div class="a ml" style="left:1449px;top:105px">Profit factor</div><div class="ic" style="left:1536.5px;top:106px"><svg width="16" height="16" viewBox="0 0 16 16"><circle cx="8" cy="8" r="8" fill="#5c5c5c"/><rect x="7" y="3.1" width="1.9" height="1.7" fill="#0f0f0f"/><rect x="7.4" y="7.1" width="1.6" height="5.8" fill="#0f0f0f"/><rect x="6" y="7.1" width="1.8" height="1.2" fill="#0f0f0f"/></svg></div>
<div class="a mv" style="left:1449px;top:131px">1.219</div>
<!-- equity chart header -->
<div class="a" style="left:16px;top:178px;font-size:14px;font-weight:bold;color:#dbdbdb">Equity chart</div>
<div class="ic" style="left:102px;top:177px"><svg width="16" height="16" viewBox="0 0 16 16"><circle cx="8" cy="8" r="8" fill="#5c5c5c"/><text x="8" y="12.2" text-anchor="middle" font-size="11.5" font-weight="bold" fill="#0f0f0f">?</text></svg></div>
<div class="a" style="left:12px;top:214px;padding:2px 3px;font-size:13px;background:rgba(15,15,15,0.85);color:#dbdbdb">Equity</div>
<div class="a" style="left:12px;top:239px;padding:2px 3px;font-size:13px;background:rgba(15,15,15,0.85);color:#dbdbdb">Buy &amp; hold</div>
<div class="a" style="left:12px;top:264px;padding:2px 3px;font-size:13px;background:rgba(15,15,15,0.85);color:#5a5a5a;width:143px;height:20px">Trades excursions</div>
<svg class="a" style="left:134px;top:266px" width="18" height="16" viewBox="0 0 18 16"><path d="M1.3,8 C4,1.8 14,1.8 16.7,8 C14,14.2 4,14.2 1.3,8 Z" fill="none" stroke="#cfcfcf" stroke-width="1"/><circle cx="9" cy="8" r="2.6" fill="none" stroke="#cfcfcf" stroke-width="1"/><line x1="3.2" y1="14.2" x2="14.8" y2="1.8" stroke="#cfcfcf" stroke-width="1"/></svg>
<div class="a" style="left:12px;top:289px;padding:2px 3px;font-size:13px;background:rgba(15,15,15,0.85);color:#dbdbdb">Run-up / Drawdowns</div>
<div class="a" style="left:16px;top:316px;width:29px;height:21px;border:1px solid #4a4a4a;border-radius:4px"></div>
<svg class="a" style="left:25px;top:322px" width="12" height="8" viewBox="0 0 12 8"><path d="M2,6 L6,2 L10,6" fill="none" stroke="#dbdbdb" stroke-width="1.4"/></svg>
<!-- date range -->
<div class="a" style="left:1580px;top:14px"><svg width="18" height="18" viewBox="0 0 18 18" fill="none" stroke="#dbdbdb" stroke-width="1.1"><rect x="0.5" y="2.5" width="17" height="15" rx="2"/><line x1="0.5" y1="6.5" x2="17.5" y2="6.5"/><line x1="4.4" y1="0" x2="4.4" y2="4"/><line x1="13.6" y1="0" x2="13.6" y2="4"/></svg></div>
<div class="a" style="left:1608px;top:16px;font-size:14px;color:#dbdbdb">Jan 1, 2023 &#8212; Mar 15, 2026</div>
<svg class="a" style="left:1789px;top:19px" width="12" height="9" viewBox="0 0 12 9"><path d="M2,6.9 L6,3.2 L10,6.9" fill="none" stroke="#c4c4c4" stroke-width="1.1"/></svg>
<div class="a" style="left:1567px;top:41px;width:240px;height:286px;background:#1e1e1e;border-radius:10px;box-shadow:0 2px 8px rgba(0,0,0,.5)">
  <div class="a" style="left:6px;top:6px;width:228px;height:32px;background:#f2f2f2;border-radius:6px;color:#131313;font-size:14px;line-height:32px;padding-left:8px">Range from chart</div>
  <div class="a" style="left:6px;top:44px;width:228px;height:1px;background:#3a3a3a"></div>
  <div class="a" style="left:14px;top:57px;font-size:11px;letter-spacing:0.4px;color:#8c8c8c">OTHER RANGES</div>
  <div class="a dd" style="left:14px;top:83px">Last 7 days</div>
  <div class="a dd" style="left:14px;top:115px">Last 30 days</div>
  <div class="a dd" style="left:14px;top:147px">Last 90 days</div>
  <div class="a dd" style="left:14px;top:179px">Last 365 days</div>
  <div class="a dd" style="left:14px;top:211px">Entire history</div>
  <div class="a" style="left:6px;top:241px;width:228px;height:1px;background:#3a3a3a"></div>
  <div class="a" style="left:14.5px;top:254px"><svg width="18" height="18" viewBox="0 0 18 18" fill="none" stroke="#dbdbdb" stroke-width="1.1"><rect x="0.5" y="2.5" width="17" height="15" rx="2"/><line x1="0.5" y1="6.5" x2="17.5" y2="6.5"/><line x1="4.4" y1="0" x2="4.4" y2="4"/><line x1="13.6" y1="0" x2="13.6" y2="4"/></svg></div>
  <div class="a dd" style="left:42px;top:256px">Custom date range&#8230;</div>
</div>
<!-- performance -->
<div class="a" style="left:16px;top:555px;width:1783px;height:520px;border:1px solid #444;border-radius:12px"></div>
<svg class="a" style="left:35px;top:576px" width="14" height="12" viewBox="0 0 14 12"><path d="M2,3.5 L7,8.5 L12,3.5" fill="none" stroke="#dbdbdb" stroke-width="1.5"/></svg>
<div class="a" style="left:59px;top:572px;font-size:18px;font-weight:bold;color:#dbdbdb">Performance</div>
<div class="a" style="left:33px;top:621px;font-size:14px;font-weight:bold;color:#dbdbdb">Profit structure</div>
<div class="a" style="left:923px;top:621px;font-size:14px;font-weight:bold;color:#dbdbdb">Benchmarking</div>
<!-- returns -->
<div class="a" style="left:17px;top:874px;width:1781px;height:40px;background:#202020"></div>
<div class="a" style="left:33px;top:886px;font-size:14px;font-weight:bold;color:#dbdbdb">Returns</div>
<div class="a" style="left:33px;top:926px;font-size:14px;color:#8c8c8c">Metric</div>
<div class="a" style="left:617px;top:926px;width:100px;text-align:right;font-size:14px;color:#8c8c8c">All</div>
<div class="a" style="left:1008px;top:926px;width:100px;text-align:center;font-size:14px;color:#8c8c8c">Long</div>
<div class="a" style="left:1363px;top:926px;width:100px;text-align:center;font-size:14px;color:#8c8c8c">Short</div>
<div class="a" style="left:17px;top:955px;width:1781px;height:1px;background:#3a3a3a"></div>
<div class="a" style="left:33px;top:976px;font-size:14px;color:#dbdbdb">Initial capital</div>
<div class="a" style="left:517px;top:974px;width:200px;text-align:right;font-size:14px;color:#dbdbdb">100.00<span style="font-size:10px;margin-left:3px">USD</span></div>
<div class="a" style="left:17px;top:1012px;width:1781px;height:1px;background:#3a3a3a"></div>
<div class="a" style="left:517px;top:1022px;width:200px;text-align:right;font-size:14px;color:#22ab94">+12.81<span style="font-size:10px;margin-left:3px">USD</span></div>
<div class="a" style="left:33px;top:1033px;font-size:14px;color:#dbdbdb">Open P&amp;L</div>
</body></html>
